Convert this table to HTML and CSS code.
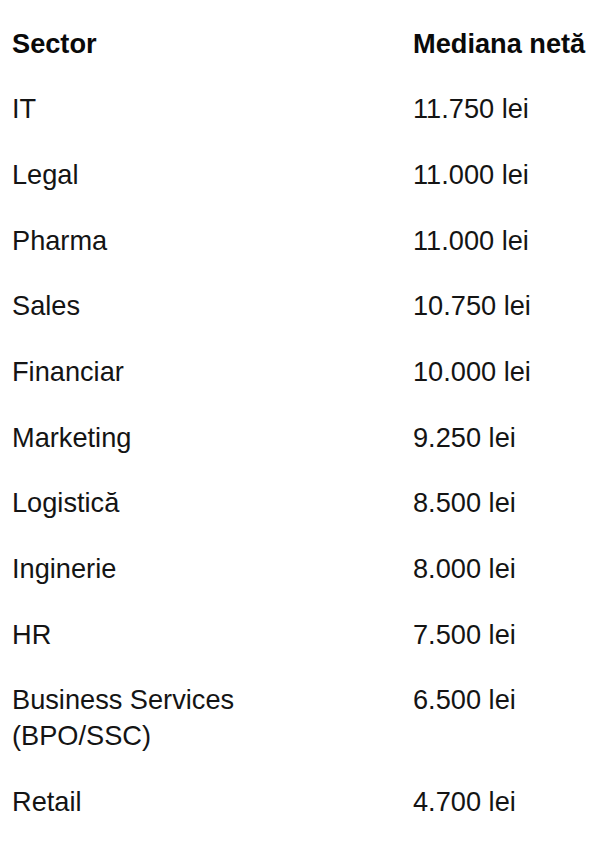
FILE: index.html
```html
<!DOCTYPE html>
<html lang="ro">
<head>
<meta charset="utf-8">
<title>Mediana netă pe sectoare</title>
<link rel="stylesheet" href="styles.css">
</head>
<body>
<div class="table">
  <div class="row head"><div class="c1">Sector</div><div class="c2">Mediana netă</div></div>
  <div class="row"><div class="c1">IT</div><div class="c2">11.750 lei</div></div>
  <div class="row"><div class="c1">Legal</div><div class="c2">11.000 lei</div></div>
  <div class="row"><div class="c1">Pharma</div><div class="c2">11.000 lei</div></div>
  <div class="row"><div class="c1">Sales</div><div class="c2">10.750 lei</div></div>
  <div class="row"><div class="c1">Financiar</div><div class="c2">10.000 lei</div></div>
  <div class="row"><div class="c1">Marketing</div><div class="c2">9.250 lei</div></div>
  <div class="row"><div class="c1">Logistică</div><div class="c2">8.500 lei</div></div>
  <div class="row"><div class="c1">Inginerie</div><div class="c2">8.000 lei</div></div>
  <div class="row"><div class="c1">HR</div><div class="c2">7.500 lei</div></div>
  <div class="row"><div class="c1">Business Services (BPO/SSC)</div><div class="c2">6.500 lei</div></div>
  <div class="row"><div class="c1">Retail</div><div class="c2">4.700 lei</div></div>
</div>
</body>
</html>
```
FILE: styles.css
```css
html, body {
  margin: 0;
  padding: 0;
  background: #ffffff;
}
body {
  font-family: "Liberation Sans", Arial, sans-serif;
  font-size: 27.2px;
  line-height: 36px;
  color: #141414;
}
.table {
  padding: 11px 0 0 12px;
  display: flex;
  flex-direction: column;
}
.row {
  display: grid;
  grid-template-columns: 401px 1fr;
}
.c1, .c2 {
  padding: 14.835px 0;
}
.c1 {
  padding-right: 48px;
}
.head {
  font-weight: bold;
  color: #0a0a0a;
}
```
